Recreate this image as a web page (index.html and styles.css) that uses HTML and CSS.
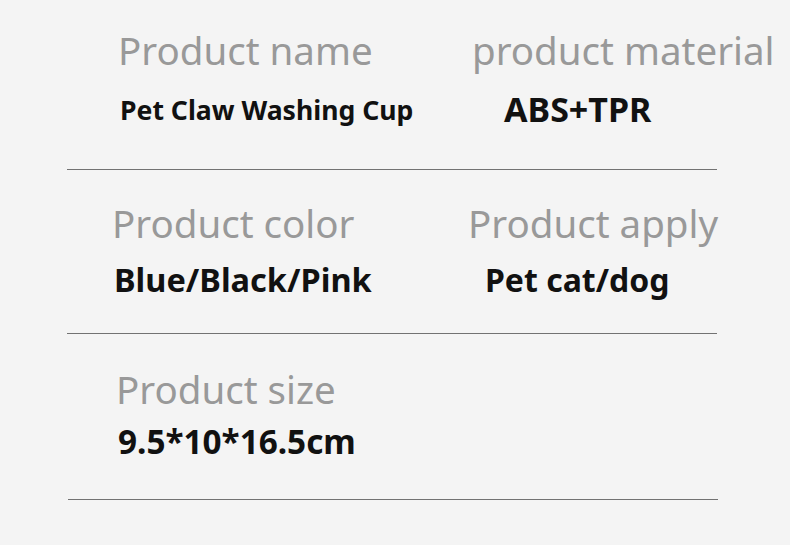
FILE: index.html
```html
<!DOCTYPE html>
<html>
<head>
    <meta charset="utf-8" />
    <title>Product parameters</title>
    <link rel="stylesheet" href="styles.css">
</head>
<body>
    <div class="sheet">
        <div class="row row-one">
            <div class="cell">
                <div class="label">Product name</div>
                <div class="value name">Pet Claw Washing Cup</div>
            </div>
            <div class="cell">
                <div class="label">product material</div>
                <div class="value material">ABS+TPR</div>
            </div>
        </div>
        <div class="rule"></div>

        <div class="row row-two">
            <div class="cell">
                <div class="label">Product color</div>
                <div class="value color">Blue/Black/Pink</div>
            </div>
            <div class="cell">
                <div class="label">Product apply</div>
                <div class="value apply">Pet cat/dog</div>
            </div>
        </div>
        <div class="rule"></div>

        <div class="row row-three">
            <div class="cell">
                <div class="label">Product size</div>
                <div class="value size">9.5*10*16.5cm</div>
            </div>
        </div>
        <div class="rule last"></div>
    </div>
</body>
</html>
```

FILE: styles.css
```css
body {
    margin: 0;
    background-color: #f4f4f4;
    font-family: "Noto Sans", "Open Sans", sans-serif;
}

.sheet {
    width: 790px;
    height: 545px;
    overflow: hidden;
}

.row {
    display: grid;
    grid-template-columns: 354px 1fr;
    padding-left: 118px;
}

.row-one {
    padding-top: 26px;
    padding-bottom: 40px;
}

.row-two {
    padding-top: 29px;
    padding-bottom: 33px;
    padding-left: 112px;
    grid-template-columns: 356px 1fr;
}

.row-three {
    padding-top: 31px;
    padding-bottom: 37px;
    padding-left: 116px;
}

.label {
    font-size: 38.5px;
    line-height: 48px;
    color: #999;
    white-space: nowrap;
}

.value {
    font-weight: bold;
    color: #111;
    white-space: nowrap;
}

.name {
    margin-top: 19px;
    margin-left: 2px;
    font-size: 26.6px;
    line-height: 34px;
}

.material {
    margin-top: 15px;
    margin-left: 32px;
    font-size: 34px;
    line-height: 40px;
}

.color {
    margin-top: 13px;
    margin-left: 2px;
    font-size: 32.5px;
    line-height: 40px;
}

.apply {
    margin-top: 13px;
    margin-left: 17px;
    font-size: 32px;
    line-height: 40px;
}

.size {
    margin-top: 7px;
    margin-left: 2px;
    font-size: 33.3px;
    line-height: 42px;
}

.rule {
    margin-left: 67px;
    width: 650px;
    border-top: 1px solid #727272;
}

.rule.last {
    margin-left: 68px;
}
```
